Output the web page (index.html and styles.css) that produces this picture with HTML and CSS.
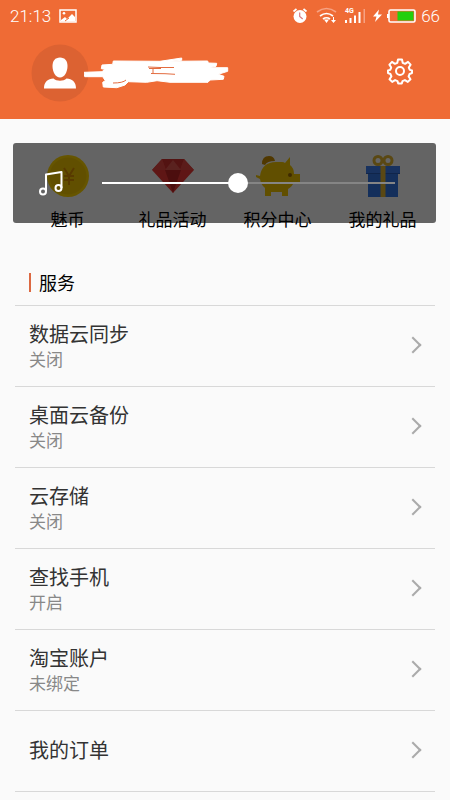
FILE: index.html
```html
<!DOCTYPE html>
<html lang="zh-CN">
<head>
<meta charset="utf-8">
<meta name="viewport" content="width=device-width, initial-scale=1">
<title>我的账户</title>
<link rel="stylesheet" href="styles.css">
</head>
<body>
<header class="header">
  <div class="status">
    <span>21:13</span>
    <svg class="photo" width="18" height="14" viewBox="0 0 18 14"><path d="M1 1h16v12H1z" fill="none" stroke="#fff" stroke-width="1.5"/><circle cx="5" cy="4.3" r="1.3" fill="#fff"/><path d="M2 12.500V11l4-3 2 2 5-5 3 3v4.500z" fill="#fff"/><path d="M6 12l4-3" stroke="#ef6b35"/></svg>
    <svg class="indicators" width="124" height="18" viewBox="0 0 124 18">
      <circle cx="8" cy="9.500" r="6.500" fill="#fff"/><path d="M1.500 4.500l3-2.500M14.500 4.500l-3-2.500" stroke="#fff" stroke-width="1.700"/><path d="M7.700 5.500v4l3 2.500" fill="none" stroke="#d97980" stroke-width="1.200"/>
      <g fill="none" stroke-width="1.700"><path d="M25 5q9.500-7 19 0" stroke="#f6a283"/><path d="M28 9q6.500-5 13 0" stroke="#fff"/><path d="M31 12q3.500-2.500 7 0" stroke="#fff"/></g><path d="M32 12.500h5L34.500 16zM39 13h5l-2.500 3zM41 10h1v4h-1z" fill="#fff"/>
      <text class="net" x="53" y="6">4G</text>
      <path d="M53 13h2v3h-2zM57.500 11h2v5h-2zM62 8.500h2v7.500h-2zM66.500 5h2v11h-2z" fill="#fff"/><path d="M71.500 2h1.500v14h-1.500z" fill="#f6a283"/>
      <path d="M87 2.500l-6 7h3.500L83 15l7-7.500h-4z" fill="#fff"/>
      <rect x="97" y="3" width="26" height="12" rx="1.500" fill="none" stroke="#fff" stroke-width="1.600"/><path d="M95 7h2v4h-2z" fill="#fff"/><path d="M105.500 4.500H121.500v9h-16z" fill="#22cf0c"/>
    </svg>
    <span class="level">66</span>
  </div>
  <div class="profile">
    <svg width="58" height="58" viewBox="0 0 58 58"><circle cx="29" cy="29" r="28.500" fill="#dc6232"/><path d="M29 13.500c-5 0-7.500 3.500-7.500 8.500 0 6 3 11.500 7.500 11.500s7.500-5.500 7.500-11.500c0-5-2.500-8.500-7.500-8.500z" fill="#fff"/><path d="M13 44.500c0-7 4-9.500 9.500-10 3 3 10 3 13 0 5.500.5 9.500 3 9.500 10z" fill="#fff"/></svg>
    <svg class="scribble" width="146" height="32" viewBox="0 0 146 32"><path d="M0 15.300L18 14.700l2.700-2.400-3.400-.6L18 8l10.700-.7.600-3.300L76 4.300 97.700 1v2.300l-11.700 1 37.700-.3.600 2 8.400.3-.7 3-8 1.400h19.700v3.600l-9.400 3 5.700 2-.7 3L126 23l-2 2.300H86l-13-1.600-10.300 1.600-18.400-.6L41 28l-8.300 2.700L19.300 30l-.6-4.700 2.600-1.600-2.600-4H.7z" fill="#fff" stroke="#fff" stroke-linejoin="round"/><path d="M64 10l12 .5 14 0M65 11.500h12M69 12v4M67 16.500l14 .2 10 .6M29 26q10 0 13-3" fill="none" stroke="#e36c40"/></svg>
    <button class="settings" aria-label="设置"><svg width="28" height="28" viewBox="0 0 28 28" fill="none" stroke="#fff" stroke-width="2" stroke-linejoin="round"><path d="M12 2.500h4l.7 3.300 2.400 1 2.900-1.900 2.600 2.700-1.800 2.900 1 2.400 2.200.6v2.500l-2.400 1-1 2.400 1.900 2.800-2.700 2.700-2.900-1.800-2.400 1-.7 2.400h-3.600l-.7-2.400-2.400-1-2.900 1.800-2.700-2.700 1.900-2.800-1-2.400-2.400-1v-2.500l2.200-.6 1-2.400-1.800-2.900 2.600-2.700 2.900 1.900 2.400-1z"/><circle cx="14" cy="14" r="4"/></svg></button>
  </div>
</header>
<main>
  <nav class="shortcuts">
    <a href="#coins"><svg width="44" height="44" viewBox="0 0 44 44"><circle cx="22" cy="22" r="21" fill="#ffd500"/><circle cx="22" cy="22" r="18.500" fill="#f3c600"/><path d="M18 14l5 8 5-8M23 22v9M18 22h10M18 26h10" fill="none" stroke="#dc9100" stroke-width="2"/></svg><span>魅币</span></a>
    <a href="#gifts"><svg width="44" height="44" viewBox="0 0 44 44"><path d="M11 5h22l10 11-21 23L1 16z" fill="#ed3935"/><path d="M11 5h22l-4 11H15z" fill="#cf302d"/><path d="M22 6l8 10H14z" fill="#e2564f"/><path d="M1 16L11 5l4 11zM43 16L33 5l-4 11z" fill="#e34742"/><path d="M14 16h16l-8 23z" fill="#bd2424"/></svg><span>礼品活动</span></a>
    <a href="#points"><svg width="44" height="44" viewBox="0 0 44 44"><path d="M6 10q0-8 7-8 5 0 6 5-8 0-10 4z" fill="#c98d00"/><path d="M4 25L0 23v-2l4 1Q6 8 20 8h6q2 0 3 1l5-6v8q4 3 4 9h6v8h-6q-2 5-6 7v7h-6v-4H15v4H9v-8q-4-3-5-9z" fill="#f3c600"/><circle cx="34" cy="21" r="2" fill="#9e6b00"/></svg><span>积分中心</span></a>
    <a href="#mygifts"><svg width="44" height="44" viewBox="0 0 44 44"><path d="M5 12h34v8H5z" fill="#3d7eed"/><path d="M7 20h30v23H7z" fill="#3476e4"/><path d="M5 19h34v1H5z" fill="#285eb9"/><path d="M19.500 12h5v31h-5z" fill="#e0b331"/><g fill="#fff" stroke="#e0b331" stroke-width="3"><circle cx="17" cy="6.500" r="4"/><circle cx="27" cy="6.500" r="4"/></g></svg><span>我的礼品</span></a>
  </nav>
  <section>
    <h2>服务</h2>
    <ul class="services">
      <li><a href="#sync"><span><b>数据云同步</b><small>关闭</small></span><i class="arrow"></i></a></li>
      <li><a href="#backup"><span><b>桌面云备份</b><small>关闭</small></span><i class="arrow"></i></a></li>
      <li><a href="#storage"><span><b>云存储</b><small>关闭</small></span><i class="arrow"></i></a></li>
      <li><a href="#find"><span><b>查找手机</b><small>开启</small></span><i class="arrow"></i></a></li>
      <li><a href="#taobao"><span><b>淘宝账户</b><small>未绑定</small></span><i class="arrow"></i></a></li>
      <li><a href="#orders"><span><b>我的订单</b></span><i class="arrow"></i></a></li>
    </ul>
  </section>
</main>
<div class="volume">
  <svg width="26" height="26" viewBox="0 0 26 26" fill="none" stroke="#fff" stroke-width="2" stroke-linejoin="round"><path d="M8 21V4.500L23.500 2v16"/><circle cx="5" cy="21.500" r="3"/><circle cx="20.500" cy="18" r="3"/></svg>
  <input type="range" min="0" max="100" value="46" aria-label="媒体音量">
</div>
</body>
</html>
```
FILE: styles.css
```css
* { box-sizing: border-box; }
body {
  margin: 0;
  position: relative;
  background: #fafafa;
  color: #000;
  font-family: "Noto Sans CJK SC", sans-serif;
  font-weight: 400;
}
svg { display: block; flex: none; }
a { color: inherit; text-decoration: none; }
.header { background: #ef6b35; color: #fff; }
.status {
  display: flex;
  align-items: center;
  height: 32px;
  padding: 0 10px;
  font: 300 17px/32px Roboto, sans-serif;
}
.photo { margin-left: 8px; }
.indicators { margin-left: auto; }
.net { font: 700 7px Roboto, sans-serif; fill: #fff; }
.level { margin-left: 5px; }
.profile { display: flex; align-items: center; height: 87px; padding: 0 36px 5px 31px; }
.scribble { margin-left: -5px; }
.settings { margin: 0 0 4px auto; padding: 0; border: 0; background: none; }
.shortcuts {
  display: grid;
  grid-template-columns: repeat(4, 1fr);
  padding: 35px 15px 0;
}
.shortcuts a { display: flex; flex-direction: column; align-items: center; }
.shortcuts span { margin-top: 9px; font-size: 17px; line-height: 24px; }
h2 {
  display: flex;
  align-items: center;
  gap: 8px;
  margin: 0 15px;
  padding: 38px 14px 10px;
  border-bottom: 1px solid #d8d8d8;
  font-size: 18px;
  font-weight: 400;
  line-height: 26px;
}
h2::before { content: ""; width: 2px; height: 19px; background: #dc6942; }
.services { margin: 0; padding: 0 15px 8px; list-style: none; }
.services li { border-bottom: 1px solid #d8d8d8; }
.services a {
  display: flex;
  align-items: center;
  justify-content: space-between;
  height: 80px;
  padding: 0 16px 2px 14px;
}
.services b { display: block; font-size: 20px; font-weight: 400; line-height: 28px; color: #333; }
.services small { display: block; font-size: 17px; line-height: 22px; color: #888; }
.arrow {
  width: 12px;
  height: 12px;
  border: solid #aaa;
  border-width: 2px 2px 0 0;
  transform: rotate(45deg);
}
.volume {
  position: absolute;
  top: 143px;
  left: 13px;
  right: 14px;
  height: 80px;
  display: flex;
  align-items: center;
  gap: 38px;
  padding: 0 41px 0 25px;
  border-radius: 3px;
  background: rgba(0, 0, 0, .6);
}
.volume input {
  appearance: none;
  flex: 1;
  min-width: 0;
  height: 20px;
  margin: 0;
  background: linear-gradient(90deg, #fff 46%, #858585 46%) center / 100% 2px no-repeat;
}
.volume input::-webkit-slider-thumb {
  appearance: none;
  width: 20px;
  height: 20px;
  border-radius: 50%;
  background: #fff;
}
```
